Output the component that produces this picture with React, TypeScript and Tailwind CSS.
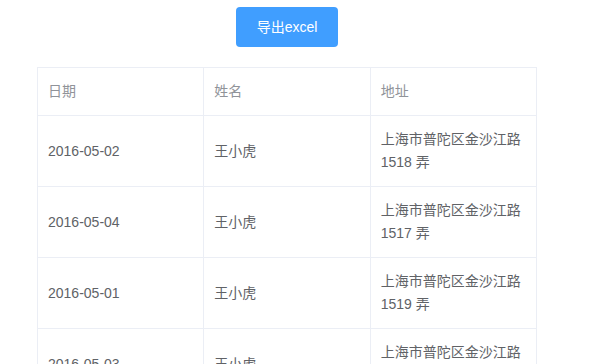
import React from "react";

const rows = [
  { date: "2016-05-02", name: "王小虎", addr: "上海市普陀区金沙江路 1518 弄" },
  { date: "2016-05-04", name: "王小虎", addr: "上海市普陀区金沙江路 1517 弄" },
  { date: "2016-05-01", name: "王小虎", addr: "上海市普陀区金沙江路 1519 弄" },
  { date: "2016-05-03", name: "王小虎", addr: "上海市普陀区金沙江路 1516 弄" },
];

export default function App() {
  return (
    <div
      className="w-[599px] h-[364px] overflow-hidden bg-white text-[14px]"
      style={{ fontFamily: '"Liberation Sans", "Noto Sans CJK SC", sans-serif' }}
    >
      <div className="ml-[37px] w-[500px] flex flex-col items-center">
        <button className="mt-[7px] h-[40px] w-[102px] rounded-[4px] bg-[#409eff] text-white text-[14px]">
          导出excel
        </button>
        <table className="mt-[20px] w-[500px] table-fixed border-collapse border border-[#ebeef5]">
          <thead>
            <tr className="text-[#909399]">
              <th className="h-[48px] border border-[#ebeef5] px-[10px] text-left font-normal">日期</th>
              <th className="h-[48px] border border-[#ebeef5] px-[10px] text-left font-normal">姓名</th>
              <th className="h-[48px] border border-[#ebeef5] px-[10px] text-left font-normal">地址</th>
            </tr>
          </thead>
          <tbody>
            {rows.map((r) => (
              <tr key={r.date} className="text-[#606266]">
                <td className="border border-[#ebeef5] px-[10px] py-[12px] leading-[23px]">{r.date}</td>
                <td className="border border-[#ebeef5] px-[10px] py-[12px] leading-[23px]">{r.name}</td>
                <td className="border border-[#ebeef5] px-[10px] py-[12px] leading-[23px]">{r.addr}</td>
              </tr>
            ))}
          </tbody>
        </table>
      </div>
    </div>
  );
}
